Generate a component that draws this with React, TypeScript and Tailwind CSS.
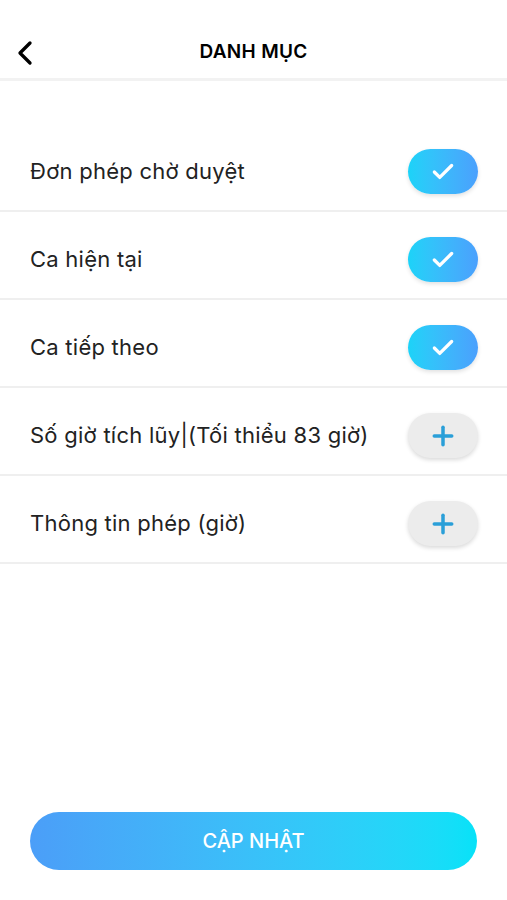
import { ChevronLeft, Check, Plus } from 'lucide-react'

const items = [
  { label: 'Đơn phép chờ duyệt', on: true },
  { label: 'Ca hiện tại', on: true },
  { label: 'Ca tiếp theo', on: true },
  { label: 'Số giờ tích lũy|(Tối thiểu 83 giờ)', on: false },
  { label: 'Thông tin phép (giờ)', on: false },
]

export default function App() {
  return (
    <div className="flex h-[900px] w-[507px] flex-col bg-white font-['Inter','Noto_Sans',sans-serif] text-[#1c1c1c]">
      {/* Header */}
      <div className="relative flex h-[81px] items-center justify-center border-b-[3px] border-[#f2f2f2] pt-[26px]">
        <button className="absolute left-[5px] top-[33px] text-black">
          <ChevronLeft className="h-[40px] w-[40px]" strokeWidth={2} />
        </button>
        <h1 className="text-[19px] font-semibold tracking-[0.3px] text-black">DANH MỤC</h1>
      </div>

      {/* List */}
      <div className="mt-[43px] flex flex-col">
        {items.map((item) => (
          <div
            key={item.label}
            className="flex h-[88px] items-center justify-between border-b-2 border-[#efefef] pl-[30px] pr-[29px] pt-[9px]"
          >
            <span className="text-[22px] tracking-[0.25px] text-[#222]">{item.label}</span>
            {item.on ? (
              <div className="flex h-[45px] w-[70px] items-center justify-center rounded-full bg-gradient-to-r from-[#1bd3f8] to-[#4aa0fd] shadow-[0_2px_4px_rgba(0,0,0,0.12)]">
                <Check className="h-[26px] w-[26px] text-white" strokeWidth={3} />
              </div>
            ) : (
              <div className="flex h-[45px] w-[70px] items-center justify-center rounded-full bg-[#ececec] shadow-[0_2px_4px_rgba(0,0,0,0.15)]">
                <Plus className="h-[30px] w-[30px] text-[#2a9fd8]" strokeWidth={2.8} />
              </div>
            )}
          </div>
        ))}
      </div>

      <div className="flex-1" />

      {/* Footer */}
      <div className="px-[30px] pb-[30px]">
        <button className="flex h-[58px] w-full items-center justify-center rounded-full bg-gradient-to-r from-[#4b9ef8] to-[#06e2f8] text-[20px] font-medium text-white">
          CẬP NHẬT
        </button>
      </div>
    </div>
  )
}
